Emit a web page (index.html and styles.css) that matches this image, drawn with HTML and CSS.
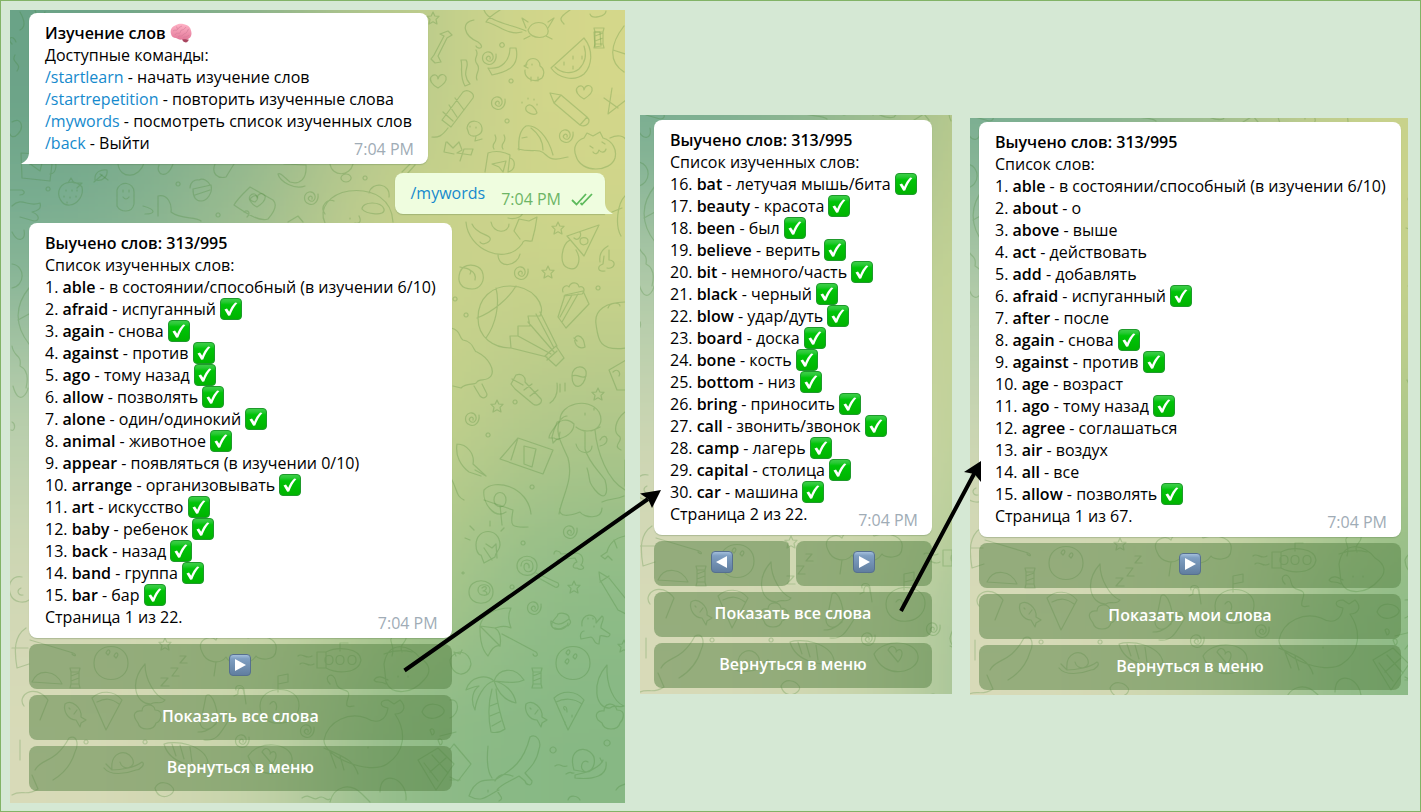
FILE: index.html
```html
<!DOCTYPE html>
<html lang="ru">
<head>
<meta charset="utf-8">
<meta name="viewport" content="width=device-width, initial-scale=1">
<title>Изучение слов</title>
<link rel="stylesheet" href="styles.css">
</head>
<body>
<svg class="defs" width="0" height="0" aria-hidden="true">
  <defs>
    <linearGradient id="green" x1="0" y1="0" x2="0" y2="1"><stop offset="0" stop-color="#3fd04a"/><stop offset=".16" stop-color="#28c934"/><stop offset=".3" stop-color="#00c408"/><stop offset="1" stop-color="#00b300"/></linearGradient>
    <linearGradient id="blue" x1="0" y1="0" x2="0" y2="1"><stop offset="0" stop-color="#a9c3df"/><stop offset=".2" stop-color="#7f9fc2"/><stop offset="1" stop-color="#607d9e"/></linearGradient>
    <linearGradient id="pink" x1="0" y1="0" x2="0" y2="1"><stop offset="0" stop-color="#ffb3c6"/><stop offset="1" stop-color="#e3799a"/></linearGradient>
    <symbol id="check" viewBox="0 0 22 22"><rect x=".5" y=".5" width="21" height="21" rx="3.5" fill="url(#green)" stroke="#1f9a2c"/><path d="M4.500 11.400 7 10.600 9.200 13.800C10.800 9.800 12.600 7.200 15.200 4.600L17.400 5C14.200 8.600 12 12.600 10.200 17.600L8.200 17.800z" fill="#fff"/></symbol>
    <symbol id="next" viewBox="0 0 22 22"><rect x=".5" y=".5" width="21" height="21" rx="3.5" fill="url(#blue)" stroke="#56708f"/><path d="M6 5 17 11 6 17z" fill="#fff"/></symbol>
    <symbol id="prev" viewBox="0 0 22 22"><rect x=".5" y=".5" width="21" height="21" rx="3.5" fill="url(#blue)" stroke="#56708f"/><path d="M16 5 5 11 16 17z" fill="#fff"/></symbol>
    <symbol id="brain" viewBox="0 0 22 22"><path d="M12 16c0 3 2 5 5 4.300l2-2.500z" fill="#a8455f"/><path d="M1 12C-.5 7 3 4 6 3c3-2 7-1.500 9-.5 3 .5 5.500 3 6 6 1 3 .5 6-1.500 7.500-2 2-5 1-7 1.500-3 .5-5-.5-6.500-1.500C3.500 16 1.500 14.500 1 12z" fill="url(#pink)"/><path d="M3 9c2-2 4 .5 5-2s3-2 4-3M5 13c1-3 4-1 5-2s0-3 2-3 3-2 4-3M8 15c1-2 4 0 5-2s3-1 4-3 0-3 2-2M13 16c1-2 4 0 6-3M6 5c1 0 2 1 1 2" fill="none" stroke="#d67f9b" stroke-width=".7"/></symbol>

    <filter id="soft" filterUnits="userSpaceOnUse" x="-300" y="-300" width="1250" height="1450"><feGaussianBlur stdDeviation="62"/></filter>
    <clipPath id="area"><rect x="10" y="10" width="615" height="793"/></clipPath>
    <path id="star" d="M0-6 1.800-2 6-1.700 3 1.400 4 6 0 3.800-4 6-3 1.400-6-1.700-1.800-2z"/>
    <path id="spiral" d="M7-4C8 3 3 8-2 6-8 4-8-4-2-6 4-7 6 0 2 3-1 4-4 1-2-1 0-3 2-1 1 1"/>
    <path id="heart" d="M0 7C-6 4-9-1-7-4-4-8 0-6 0-2 1-7 6-8 8-4 9 0 5 4 0 7z"/>
    <path id="candy" d="M-4-6H4V6H-4zM-4-2 4-5M-4 3 4 0M-4-6-5-10H5L4-6M-4 6-5 10H5L4 6"/>
    <path id="fish" d="M-11-8C-4-13 6-4 5 5L10 8 5 11 4 15 0 8C-8 8-13-1-11-8zM-7-4l1 1M-2 2l3-4"/>
    <path id="leaf" d="M-6 4C-7-4 0-7 6-6 7 0 2 6-6 4zM-7 6 1-1"/>
    <g id="wallpaper" clip-path="url(#area)">
      <g filter="url(#soft)">
        <path fill="#6aa387" d="M-200-200H164V169H-200z"/><path fill="#86b08b" d="M164-200H317V169H164z"/><path fill="#b7ca8c" d="M317-200H471V169H317z"/><path fill="#d4d78a" d="M471-200H900V169H471z"/>
        <path fill="#7eb093" d="M-200 169H164V328H-200z"/><path fill="#9dbe91" d="M164 169H317V328H164z"/><path fill="#c9d28c" d="M317 169H471V328H317z"/><path fill="#ccd48a" d="M471 169H900V328H471z"/>
        <path fill="#b5cdab" d="M-200 328H164V486H-200z"/><path fill="#bdd0a0" d="M164 328H317V486H164z"/><path fill="#c9d48c" d="M317 328H471V486H317z"/><path fill="#b2c88a" d="M471 328H900V486H471z"/>
        <path fill="#cfd7b4" d="M-200 486H164V645H-200z"/><path fill="#d2daae" d="M164 486H317V645H164z"/><path fill="#b2cb8d" d="M317 486H471V645H317z"/><path fill="#8fbc87" d="M471 486H900V645H471z"/>
        <path fill="#d8dab8" d="M-200 645H164V1000H-200z"/><path fill="#c9d5ac" d="M164 645H317V1000H164z"/><path fill="#8fbb88" d="M317 645H471V1000H317z"/><path fill="#87b884" d="M471 645H900V1000H471z"/>
      </g>
      <g class="doodles">
        <!-- top strip and left column -->
        <path d="M20 12q8 14 0 18M35 10l4 12 6-10M15 55c-5 8 8 8 2 16M16 42c-3-8-10-4-4 2M12 122c10-6 12 6 6 12s-8 0-8 0M21 153 53 155 50 181 22 178zM52 160c6 0 5 14-2 14M28 162l15-3-3 12-7-5z"/>
        <path d="M60 188C56 196 62 206 70 205 78 204 84 195 82 187 76 180 64 181 60 188zM68 183l3-5 3 5 8 0-5 5M66 190v1M72 190v1M77 190v1M64 196v1M70 197v1M76 196v1M67 202v1"/>
        <path d="M117 190C120 180 134 182 134 192V204C132 214 120 212 117 206zM123 190v2M129 190v2M123 197q3 4 6 0M193 189l18-4c2 8-4 16-10 16s-8-6-8-12zM190 188c0-6 5-9 9-8 4-3 10 2 11 5M195 195l15-5"/>
        <path d="M250 187 273 200C277 204 276 210 268 219 260 222 247 214 234 205 238 198 245 192 250 187zM252 197c5-4 8 1 3 5-5-1-6-3-3-5zM244 212c4-3 7 1 3 5"/>
        <path d="M325 223C318 208 330 194 349 191 374 188 392 200 393 222M325 214c-6-8 3-16 9-13M369 193c3-12 22-10 20 4M362 209c0-8 20-8 22 0s-18 5-22 0zM350 218v1M359 216c3 6 0 8-4 7"/>
        <path d="M118 164c2 16 22 14 26-1M159 165c-4 9 8 16 14-1M215 164c-4 10 3 15 11 13l8-13M284 164l22 1c1 14-6 20-16 17-6-5-10-10-12-8 2 8 17 16 27 12M330 164c2 13 20 13 23 0M402 172l8-8M407 174l8-9M100 174l8 6"/>
        <path d="M10 190h12c4 2 2 5-2 5M12 206c10-10 16 2 28-3 2 6-3 8-8 9 8 3 8 9 2 9l-14-4M143 206c14 4 12 8 2 8M158 216V196c10-2 14 8 13 16 10 8 24 4 30 9M288 222l10-6 5 6"/>
        <path d="M12 232c6 12 14 8 12-2M12 264c14 2 13 22 0 24M29 288C15 305 14 325 29 344M18 320l11-6M12 346c2 12 10 8 8 20 8 4 8 14 6 22M13 386c6 22 15 6 15 2M12 422c4 2 3 10-1 8M22 577c-8-2-15 5-12 16s15 10 19 7M21 588c-5 2-3 8 2 7M26 628c-12 8-12 22-9 40l12-4M12 648h16"/>
        <!-- upper right -->
        <path d="M440 34l8-3 4 4-5 3-9 18 3 6-6 1-4-4 3-4 10-19zM474 20c-14 2-10 16 4 22 8 6 0 8-2 4M484 10c4 12 26 14 42 21M500 10c-8 5-12 8-14 12 12 2 22 14 36 10M528 30c4-10 18-10 20 0s-18 10-20 0zM526 28l-4-10 6 4M548 28l6-10-6 4M530 36l-6 3M546 36l6 3M564 24c-4-4-6-6 6-14M590 14c2 6 16 2 16-3M594 32l6 0 1 14-6 1z"/>
        <path d="M551 68 584 38C594 50 592 66 584 74 574 82 558 78 551 68zM555 67c6 6 16 8 24 2 6-6 8-14 5-23M564 62v3M573 56v3M582 56v3M573 66v3"/>
        <path d="M526 66c0-10 14-10 14 0 4 2 5 8 2 12-8 6-18 0-17-8M527 64l-3 2 4 2M532 64v1M531 81v-4M538 81v-4M516 48c4 18-8 24-24 27l-4-7c14 2 22-8 22-20zM466 60c5 6-6 12 4 24l-5 2c-6-10-2-20-4-26zM476 50c4 6-4 8 1 14s-3 10 0 16"/>
        <path d="M442 120 463 92C468 88 475 94 473 98L451 127zM443 112l10 9M449 105l8 12M455 98l9 12M448 128c-6 8-10 10-16 9M467 128c2-10 14-8 15 0s-10 10-13 6zM476 136l-1 5 7-2M470 126v1M476 127v1"/>
        <path d="M550 93 561 95 587 117 580 125 554 103zM554 103l7-8M580 125c6 3 12-3 7-8M526 107c4-6 10 2 11 6-2 3-13 0-11-6zM522 102v1M528 98v1M534 99v1M537 104v1M519 150C518 138 520 130 526 126 536 124 548 136 553 155M518 149c16 4 20-2 28 6s18 2 22 2M531 128c8 6 12 14 12 22M522 138l5-1"/>
        <path d="M485 172 488 153C496 150 505 152 510 155L508 172M510 158c6 2 6 12-2 14M492 164l14-3-3 11-4-5zM494 149c-4-6 5-6 1-14M503 149c-4-6 5-6 1-14M447 142l6 6 6-6 3 8-5 3 14 2 2-6-9 0-4 12M446 142l-2 10 10 2"/>
        <path d="M576 156c-4-10 2-16 8-18l3-5 6 3 7-4 3 6c10 3 14 12 12 20-4 14-34 16-39-2zM590 146l3 2M602 142l3 2M593 152c2 3 5 2 6-2 2 3 6 3 7-1M610 138c8-4 14-2 16 2M624 26c-14 18-16 36 0 46M613 50l12 4M612 88l-4 26 18-14M604 98l14 10M625 196c-8 8-10 30-4 40M612 212l10-4"/>
        <!-- centre right -->
        <path d="M466 222c2 28 40 44 56 22 2-6 6-2 10-3l3-12 2-12-8 4-10-2-5 12 6 8M472 224c4 10 16 10 18 14s-8 8-10 4M491 222c2 12 18 12 18 2M498 254c0 16 20 12 22 0M508 218c8 2 16-2 14-6M567 236 599 225 584 256zM574 238c4 4 8-2 6-6M580 241c0 6 8 4 8 0s-8-5-8 0zM570 240c-8 4-12 24-2 28s14-8 8-18M600 262c-1-6 1-12 8-16M604 256l-1 8c-6 2-6 8 2 7M609 250v10c8 0 6 10-2 8"/>
        <path d="M460 272c4-10 18-8 22-1 4 10-2 18-10 18-12 0-15-8-12-17zM470 274c4-6-8-6-10-7M470 270c4 2 6 6 5 10"/>
        <path d="M478 318C478 298 492 286 510 286 534 286 546 306 540 316M478 318c0 20 16 30 33 30M511 348l-1-12 8 0 0-10 12 0-2-10 12 0M477 318c16-6 32-20 39-32M486 338c10-14 14-34 10-50M540 312 557 346M511 348l36 9M518 336l33 18M528 322l26 30M536 314l18 34M545 356l11-10 8 12-8 8zM547 360l10-9M558 317l7-22 18-4 6 13-23 24zM562 322l16-28M560 317l12-22M563 292c-2-5 4-8 6-5 2-6 9-5 10 0 6-2 6 5 3 7l-18 2"/>
        <path d="M626 302c-20 0-32 8-30 22s2 28 30 24M608 308c2-6 12-6 12-2M575 342c-2-8 8-10 10 5-4 2-9 0-10-5zM574 338l3 3M572 376c0-12 16-12 14-1-2 14-14 16-14 1zM572 376c6-3 10 4 14 0M626 360l-17 10 8 20 8 0M613 372c4-4 8 0 6 4"/>
        <path d="M451 328c10 2 8 10 12 12 12 2 10 12 14 12 12 6 18 18 14 24s-12 2-14 6-10 0-16 6l-8-2M474 386l6 10c4 4 9 0 6-4l-4-8M511 384l5-9c6-2 10 2 9 7l16 17c2 4-4 8-8 5l-18-15zM512 379l11 6M524 390l8-6M530 396l8-6M550 403c6-4 8-12 7-20M560 384v8M565 383v8"/>
        <path d="M560 420c0-16 28-24 39-8 4 8 2 16-8 19M567 416c-6 0-6 6-10 6-1 6-8 10-8 16l5 0c8 4 4 0 6-6M560 420c-6 12 2 24 8 38 6 22-6 38-9 56M585 432v17c4 14 14 22 20 31 4 14 0 22-10 10-8-10-4-10-8-22M595 430c2 22 12 50 30 60M576 444c2 10 16 12 16 2M600 440c6-10 12 4 0 6M576 427q10 8 24 0M585 413v2M594 408v2M560 508c-2 10 10 8 20 4 4 6 22 8 22-4M602 502c8-4 14-2 22-6"/>
        <path d="M457 444c10 0 18 10 16 20l13 12M457 444c-2 12 4 22 12 28l12 4M475 470l11 6M500 459 518 438 553 450 543 474zM518 438l-7 22M524 446l12 3-4 18-8-3zM484 490c10-12 44-4 47 24M484 490c-2 12 10 30 22 22M494 500c0-10 12-10 12 0s-12 8-12 0zM452 480c6 12 4 16 12 20M554 430c4-12 14-12 20-6 0 8-8 14-17 15l-4 4-1-6zM625 412c-10 8-12 20-6 24s-8 10 2 14M625 460v26"/>
        <path d="M484 500 513 510C511 524 508 528 528 527M500 505l2 20M476 545c0-18 24-18 24 0 0 6-5 7-5 12l-11 6-3-8c-3 0-5-5-5-10zM484 548l8 12M486 544l6 4 4-4 1 14M470 540l-5-2M474 530l-4-4M490 526v-5M501 531l3-3"/>
        <path d="M469 592c0-15 24-15 24 0s-24 15-24 0zM478 590c0-7 12-7 12 0s-12 7-12 0zM482 588c5-4 6 2 1 3 6 0 4 6 0 4M517 566c0-13 20-13 20 0s-20 12-20 0zM521 566c0-8 12-8 12 0s-9 7-9 1 6-4 5 1M536 573l22 10c2 3-1 5-3 4l-20-11M554 554c0-5 6-3 7 0l16-1c8 2 6 10 4 12 6 3 0 6-4 3-6 1-4-5 0-6l-2-4-18 2M599 572l1 8 18 30 8 4M599 572l10 6 16 20M600 582l9-6M625 536c-10 2-16 8-18 16l-6 4 4 3 3-3 4 4M614 540l3 8"/>
        <path d="M480 626c2-12 16-18 31-18-4 8-2 14 0 20-8-4-14 0-16 0 6 4 6 12 5 18-5-2-10 6-12 10-8-8-8-22-8-30zM480 626l20 20M495 628l-15-2M502 634l34 18c4 4-2 6-3 2M552 626c-2-6 6-8 6-12 4-2 12 0 11 5 4 4-1 6-1 7M551 621c8 6 12 2 18-2M551 621c-2 12 16 10 17 2M555 628c4 2 8 0 11-2M582 626c-2-14 16-14 14-3l6-7c4 2-2 8-1 12l9 6c0 6-8 0-10 2l-1 8c-6 0-4-6-8-7l-10 2c-2-6 2-8 3-8M588 618v1M593 618v1M594 626v1"/>
        <path d="M556 663c0-22 34-22 34 0s-34 22-34 0zM566 653c2-6 6-2 2 2zM573 657c2-6 6-2 2 2zM565 662c2-6 6-2 2 2zM607 665c-16 18-12 44 3 43 4-4 10 0 14-2-10-4-18-20-17-41zM598 720c-4-6 0-10 6-9 0-8 10-10 13-1 10 0 6 10 3 13-2 8-16 8-18 0zM554 698c8-8 22-8 30 2l-16 30zM556 702c8-4 18-4 26 2M565 710c-4-4 2-6 2 2M572 717v-2M565 724v-2"/>
        <path d="M466 690c4-14 20-16 28-9 4-12 20-16 30-1-8 4-18 2-30 1 10 2 20 10 22 22-10-2-18-10-22-22-10 2-18 18-19 29-5-10-2-20 4-24-4 0-8 2-13 4zM492 689c-4 14-4 28-1 43 4 1 10 0 14-3-4-12-8-26-9-40M490 706l8-3M490 716l10-4M492 726l9-5M450 660c4-12 20-10 21 4-2 14-20 14-21-4zM456 656l-2-4 6 2 2-4M450 700c10-2 10 14 0 18"/>
        <path d="M469 796c6-18 18-16 26-16 16-10 28-16 35-43 6-4 12 4 9 12-2 12-8 18-14 24l7 8c0 6-6 4-7 0l-6-5c-10 6-18 8-22 14 2 6 8 8 2 11M469 796c14 8 20-2 30-6M495 781c6-12 18-4 18-5M450 749l4-5 17 20-13 17-8-4M450 780h10M488 790v2M492 778c-6-8-5-22-4-32"/>
        <path d="M574 770c-6-20 8-24 16-18 8 6 4 20-4 20-8-2-4-14 2-10M574 770l12 2c8-2 16-8 17-12M606 762c2 14-12 18-31 16v-3l12-3M600 758l2 4M555 766c6-4 6 2 12 0M566 774c6-4 4 0 8-1M616 790c4-6 6-4 9-6M568 800c2-6 10-4 12 0"/>
        <!-- lower left and centre -->
        <path d="M30 640l40 12c8 2 6 6 2 2M94 663c0-22 34-22 34 0s-34 22-34 0zM106 653c2-6 6-2 2 2zM114 656c2-6 6-2 2 2zM32 682c6-14 24-12 30 2zM145 664c-16 18-10 40 6 40 4-4 10 2 14-4-10-4-20-20-20-36M136 720c-4-6 0-10 6-9 0-8 12-8 13-1 10 0 6 12 1 13-2 8-16 8-18 0zM161 678h7l-7 8h8M171 668h7l-6 8h7M180 656h6l-6 7h7M92 698c8-8 22-8 30 2l-16 30zM97 702c8-4 14-4 22 2M202 652c-6-12 8-18 14-12 4-12 28-12 32-2 16-6 30 2 28 12 0 12-18 10-20 6-6 10-26 10-30 1-6 8-20 6-24-5zM216 662l-2 14M240 660l3 15"/>
        <path d="M326 652c12-6 34-4 35 8-2 14-24 14-35 8zM317 652h9v16h-9zM325 660c0-6 8-6 8 0s-8 6-8 0zM336 660c0-6 8-6 8 0s-8 6-8 0zM348 660c0-6 8-6 8 0s-8 6-8 0zM340 651v-8h8M298 656c4-4 8 4 14 0M300 664c4-4 8 4 14 0M384 664c4-24 26-20 36-6 10 6 12 14 4 22-12 14-32 16-38 2zM386 684c-6-4-10 0-12-4 4-6 10-2 14 0M384 654c10-4 20-4 28-2M392 656c4-12-6-16 2-20M402 652c-4-8 6-10 4-16M398 676v1M408 676v1"/>
        <path d="M260 706c0-22 40-22 39 0s-39 24-39 0zM270 704c4-6 8 0 6 6M278 692v-16l10-2v8l-10 2M244 694c0-8-7-8-6 0l-4 2M236 690c-2-6 8-6 8 0l2 14M206 696c6-6 14 16 10 28-12 12-20 0-14-8zM198 732c16 0 20-14 28-20l4 6c-8 12-12 24-26 22M330 684c-8-8 4-14 6-2s16 4 12 16 2 8 6 8"/>
        <path d="M324 740c4-20 26-28 42-22 10 6 20 4 22-10-10-2-8-8 0-8l6 4 6-4c8 8 2 14-5 14 12 18 10 38-8 50-18 12-64-8-63-24zM324 748c18 8 30 12 34 26M330 752l6 16M340 756l4 14M368 747v1M422 712c4-12 20-8 22-2s-16 14-22 2zM430 730c4-4 6 4 2 5zM438 740c4-4 6 4 2 5zM418 760l20-12 16 16-18 26zM424 763l14 18M432 755l16 18M430 772l16-14"/>
        <path d="M35 770c6-12 20-6 34-32 8-4 10 6 6 14-4 14-12 22-22 28M112 770c-2-18 14-22 20-12s-10 14-12 4M106 764l6 6c8 0 22-2 30-8 4 2-2 8-6 8-10 4-26 6-32-2M164 744c10-4 40 0 44 18-4 8-38 4-44-18zM172 744l4 12M180 745l4 14M190 747l2 15M248 756c10-16 42-14 44 2s-34 26-44-2zM262 752c4-8 10 0 8 2 4-6 10 0 2 10zM155 788c4-8 14-6 18 0s-14 16-18 0zM330 802c4-16 20-20 32-8l8 8M380 792c0-24 28-14 26 8M302 798c8-6 10 4 16 0s8 4 12 1M12 795c10-6 14 2 26-6l-6-14"/>
        <path d="M440 736l16-4M20 740v20M24 706c-8-10 10-24 24-6l-8 20"/>
        <use href="#star" x="433" y="18"/><use href="#star" x="558" y="228"/><use href="#star" x="548" y="272"/><use href="#star" x="497" y="406"/><use href="#star" x="598" y="394"/><use href="#star" x="574" y="587"/><use href="#star" x="165" y="644"/><use href="#star" x="624" y="646"/>
        <use href="#spiral" x="311" y="198"/><use href="#spiral" x="498" y="103"/><use href="#spiral" x="489" y="58"/><use href="#spiral" x="566" y="136"/><use href="#spiral" x="521" y="273"/><use href="#spiral" x="472" y="419"/><use href="#spiral" x="570" y="532"/><use href="#spiral" x="534" y="608"/><use href="#spiral" x="307" y="731"/><use href="#spiral" x="242" y="741"/>
        <use href="#heart" x="438" y="81"/><use href="#heart" x="584" y="92"/><use href="#heart" x="257" y="200"/>
        <use href="#candy" x="599" y="38"/><use href="#candy" x="537" y="678"/><use href="#candy" x="75" y="678"/>
        <use href="#fish" x="537" y="712"/><use href="#fish" x="76" y="712"/><use href="#leaf" x="101" y="176"/>
        <path d="M501 43a1 1 0 1 0 2 4 2 2 0 0 0-2-4M455 297a2 2 0 1 0 .1 0M466 313a2 2 0 1 0 .1 0M598 286a2 2 0 1 0 .1 0M515 400a2 2 0 1 0 .1 0M488 433a2 2 0 1 0 .1 0M532 485a2 2 0 1 0 .1 0M523 541a2 2 0 1 0 .1 0M512 585a2 2 0 1 0 .1 0M463 572a1 1 0 1 0 .1 0M553 747a3 3 0 1 0 .1 0M607 740a3 3 0 1 0 .1 0M48 187a2 2 0 1 0 .1 0M178 182a2 2 0 1 0 .1 0M218 213a2 2 0 1 0 .1 0M346 174a5 4 0 1 0 .1 0M365 176a2 2 0 1 0 .1 0M145 740a2 2 0 1 0 .1 0M86 740a2 2 0 1 0 .1 0M507 119a2 2 0 1 0 .1 0M511 79a2 2 0 1 0 .1 0"/>
      </g>
    </g>
  </defs>
</svg>

<main class="board">
  <section class="chat chat-main" aria-label="Изученные слова, страница 1">
    <svg class="backdrop" viewBox="10 10 615 793" preserveAspectRatio="xMinYMin slice" aria-hidden="true"><use href="#wallpaper"/></svg>
    <article class="bubble bubble-in">
      <p class="title">Изучение слов <svg class="emoji" role="img" aria-label="Мозг"><use href="#brain"/></svg></p>
      <p>Доступные команды:</p>
      <p><a href="#startlearn">/startlearn</a> - начать изучение слов</p>
      <p><a href="#startrepetition">/startrepetition</a> - повторить изученные слова</p>
      <p><a href="#mywords">/mywords</a> - посмотреть список изученных слов</p>
      <p><a href="#back">/back</a> - Выйти</p>
      <time class="stamp">7:04 PM</time>
      <svg class="tail tail-in" viewBox="0 0 8 12" aria-hidden="true"><path d="M8 0C8 6 5 9 0 12H8z" fill="#fff"/></svg>
    </article>
    <article class="bubble bubble-out">
      <a href="#mywords">/mywords</a>
      <time class="sent">7:04 PM</time>
      <svg class="ticks" viewBox="0 0 22 14" role="img" aria-label="Прочитано"><path d="M1 8 5.500 12.500 15 2M9.500 11 11 12.500 21 2" fill="none" stroke="#5dba5c" stroke-width="1.800"/></svg>
      <svg class="tail tail-out" viewBox="0 0 8 12" aria-hidden="true"><path d="M0 0C0 6 3 9 8 12H0z" fill="#effddf"/></svg>
    </article>
    <div class="reply">
      <article class="bubble">
        <p class="title">Выучено слов: 313/995</p>
        <p>Список изученных слов:</p>
        <ul class="words">
          <li>1. <b>able</b> - в состоянии/способный (в изучении 6/10)</li>
          <li>2. <b>afraid</b> - испуганный <svg class="emoji" role="img" aria-label="Изучено"><use href="#check"/></svg></li>
          <li>3. <b>again</b> - снова <svg class="emoji" role="img" aria-label="Изучено"><use href="#check"/></svg></li>
          <li>4. <b>against</b> - против <svg class="emoji" role="img" aria-label="Изучено"><use href="#check"/></svg></li>
          <li>5. <b>ago</b> - тому назад <svg class="emoji" role="img" aria-label="Изучено"><use href="#check"/></svg></li>
          <li>6. <b>allow</b> - позволять <svg class="emoji" role="img" aria-label="Изучено"><use href="#check"/></svg></li>
          <li>7. <b>alone</b> - один/одинокий <svg class="emoji" role="img" aria-label="Изучено"><use href="#check"/></svg></li>
          <li>8. <b>animal</b> - животное <svg class="emoji" role="img" aria-label="Изучено"><use href="#check"/></svg></li>
          <li>9. <b>appear</b> - появляться (в изучении 0/10)</li>
          <li>10. <b>arrange</b> - организовывать <svg class="emoji" role="img" aria-label="Изучено"><use href="#check"/></svg></li>
          <li>11. <b>art</b> - искусство <svg class="emoji" role="img" aria-label="Изучено"><use href="#check"/></svg></li>
          <li>12. <b>baby</b> - ребенок <svg class="emoji" role="img" aria-label="Изучено"><use href="#check"/></svg></li>
          <li>13. <b>back</b> - назад <svg class="emoji" role="img" aria-label="Изучено"><use href="#check"/></svg></li>
          <li>14. <b>band</b> - группа <svg class="emoji" role="img" aria-label="Изучено"><use href="#check"/></svg></li>
          <li>15. <b>bar</b> - бар <svg class="emoji" role="img" aria-label="Изучено"><use href="#check"/></svg></li>
        </ul>
        <p>Страница 1 из 22.</p>
        <time class="stamp">7:04 PM</time>
      </article>
      <div class="keys"><button class="key" type="button" aria-label="Следующая страница"><svg class="emoji"><use href="#next"/></svg></button></div>
      <div class="keys"><button class="key" type="button">Показать все слова</button></div>
      <div class="keys"><button class="key" type="button">Вернуться в меню</button></div>
    </div>
  </section>

  <section class="chat chat-second" aria-label="Изученные слова, страница 2">
    <svg class="backdrop" viewBox="14 217 312 579" preserveAspectRatio="xMinYMin slice" aria-hidden="true"><use href="#wallpaper"/></svg>
    <div class="reply">
      <article class="bubble">
        <p class="title">Выучено слов: 313/995</p>
        <p>Список изученных слов:</p>
        <ul class="words">
          <li>16. <b>bat</b> - летучая мышь/бита <svg class="emoji" role="img" aria-label="Изучено"><use href="#check"/></svg></li>
          <li>17. <b>beauty</b> - красота <svg class="emoji" role="img" aria-label="Изучено"><use href="#check"/></svg></li>
          <li>18. <b>been</b> - был <svg class="emoji" role="img" aria-label="Изучено"><use href="#check"/></svg></li>
          <li>19. <b>believe</b> - верить <svg class="emoji" role="img" aria-label="Изучено"><use href="#check"/></svg></li>
          <li>20. <b>bit</b> - немного/часть <svg class="emoji" role="img" aria-label="Изучено"><use href="#check"/></svg></li>
          <li>21. <b>black</b> - черный <svg class="emoji" role="img" aria-label="Изучено"><use href="#check"/></svg></li>
          <li>22. <b>blow</b> - удар/дуть <svg class="emoji" role="img" aria-label="Изучено"><use href="#check"/></svg></li>
          <li>23. <b>board</b> - доска <svg class="emoji" role="img" aria-label="Изучено"><use href="#check"/></svg></li>
          <li>24. <b>bone</b> - кость <svg class="emoji" role="img" aria-label="Изучено"><use href="#check"/></svg></li>
          <li>25. <b>bottom</b> - низ <svg class="emoji" role="img" aria-label="Изучено"><use href="#check"/></svg></li>
          <li>26. <b>bring</b> - приносить <svg class="emoji" role="img" aria-label="Изучено"><use href="#check"/></svg></li>
          <li>27. <b>call</b> - звонить/звонок <svg class="emoji" role="img" aria-label="Изучено"><use href="#check"/></svg></li>
          <li>28. <b>camp</b> - лагерь <svg class="emoji" role="img" aria-label="Изучено"><use href="#check"/></svg></li>
          <li>29. <b>capital</b> - столица <svg class="emoji" role="img" aria-label="Изучено"><use href="#check"/></svg></li>
          <li>30. <b>car</b> - машина <svg class="emoji" role="img" aria-label="Изучено"><use href="#check"/></svg></li>
        </ul>
        <p>Страница 2 из 22.</p>
        <time class="stamp">7:04 PM</time>
      </article>
      <div class="keys">
        <button class="key" type="button" aria-label="Предыдущая страница"><svg class="emoji"><use href="#prev"/></svg></button>
        <button class="key" type="button" aria-label="Следующая страница"><svg class="emoji"><use href="#next"/></svg></button>
      </div>
      <div class="keys"><button class="key" type="button">Показать все слова</button></div>
      <div class="keys"><button class="key" type="button">Вернуться в меню</button></div>
    </div>
  </section>

  <section class="chat chat-third" aria-label="Все слова, страница 1">
    <svg class="backdrop" viewBox="15 218 438 577" preserveAspectRatio="xMinYMin slice" aria-hidden="true"><use href="#wallpaper"/></svg>
    <div class="reply">
      <article class="bubble">
        <p class="title">Выучено слов: 313/995</p>
        <p>Список слов:</p>
        <ul class="words">
          <li>1. <b>able</b> - в состоянии/способный (в изучении 6/10)</li>
          <li>2. <b>about</b> - о</li>
          <li>3. <b>above</b> - выше</li>
          <li>4. <b>act</b> - действовать</li>
          <li>5. <b>add</b> - добавлять</li>
          <li>6. <b>afraid</b> - испуганный <svg class="emoji" role="img" aria-label="Изучено"><use href="#check"/></svg></li>
          <li>7. <b>after</b> - после</li>
          <li>8. <b>again</b> - снова <svg class="emoji" role="img" aria-label="Изучено"><use href="#check"/></svg></li>
          <li>9. <b>against</b> - против <svg class="emoji" role="img" aria-label="Изучено"><use href="#check"/></svg></li>
          <li>10. <b>age</b> - возраст</li>
          <li>11. <b>ago</b> - тому назад <svg class="emoji" role="img" aria-label="Изучено"><use href="#check"/></svg></li>
          <li>12. <b>agree</b> - соглашаться</li>
          <li>13. <b>air</b> - воздух</li>
          <li>14. <b>all</b> - все</li>
          <li>15. <b>allow</b> - позволять <svg class="emoji" role="img" aria-label="Изучено"><use href="#check"/></svg></li>
        </ul>
        <p>Страница 1 из 67.</p>
        <time class="stamp">7:04 PM</time>
      </article>
      <div class="keys"><button class="key" type="button" aria-label="Следующая страница"><svg class="emoji"><use href="#next"/></svg></button></div>
      <div class="keys"><button class="key" type="button">Показать мои слова</button></div>
      <div class="keys"><button class="key" type="button">Вернуться в меню</button></div>
    </div>
  </section>

  <svg class="arrows" viewBox="0 0 1421 812" aria-hidden="true">
    <path d="M404.500 670.500 648 499M901 611 974.500 473" fill="none" stroke="#000" stroke-width="4"/>
    <path d="M661 490 652 508 648 499 640 493.500zM981 461 981 482 974.500 474 964 472z"/>
  </svg>
</main>
</body>
</html>
```
FILE: styles.css
```css
* { box-sizing: border-box; }

body {
  margin: 0;
  font-family: "Open Sans", "Noto Sans", sans-serif;
  font-size: 16px;
  line-height: 22px;
  color: #000;
  background: #d5e8d4;
}

p, ul { margin: 0; padding: 0; }
li { list-style: none; }
b, .title { font-weight: 600; }
a { color: #168acd; text-decoration: none; }

.defs { position: absolute; }

.doodles {
  fill: none;
  stroke: #3c7d28;
  stroke-opacity: .24;
  stroke-width: 1.2;
  stroke-linecap: round;
  stroke-linejoin: round;
}

.board {
  position: relative;
  display: grid;
  grid-template-columns: 615fr 327fr 456fr;
  align-items: center;
  min-height: 100vh;
  padding: 9px 12px 8px 9px;
  border: 1px solid #82b366;
}

.chat {
  position: relative;
  display: flex;
  flex-direction: column;
  align-items: flex-start;
  gap: 9px;
  overflow: hidden;
}

.chat-main { padding: 3px 20px 12px 19px; }
.chat-second { margin: 0 0 4px 15px; padding: 5px 20px 6px 14px; }
.chat-third { margin-left: 18px; padding: 4px 7px 5px 9px; }

.backdrop {
  position: absolute;
  inset: 0;
  width: 100%;
  height: 100%;
}

.bubble {
  position: relative;
  padding: 9px 16px 10px;
  border-radius: 8px;
  background: #fff;
  box-shadow: 0 1px 1px rgba(60, 100, 50, .25);
  white-space: nowrap;
}

.bubble-in { border-bottom-left-radius: 0; }

.bubble-out {
  display: flex;
  align-self: flex-end;
  gap: 10px;
  padding-right: 12px;
  border-bottom-right-radius: 0;
  background: #effddf;
}

.stamp {
  position: absolute;
  right: 14px;
  bottom: 4px;
  color: #a0acb6;
}

.sent {
  padding-left: 6px;
  margin: 6px 0 -6px;
  color: #6db566;
}

.ticks {
  align-self: flex-end;
  width: 22px;
  height: 14px;
  margin-bottom: -2px;
}

.tail {
  position: absolute;
  bottom: 0;
  width: 8px;
  height: 12px;
}

.tail-in { right: 100%; }
.tail-out { left: 100%; }

.emoji {
  display: inline-block;
  width: 22px;
  height: 22px;
  vertical-align: top;
}

.reply {
  position: relative;
  display: flex;
  flex-direction: column;
  gap: 6px;
}

.chat-second .reply,
.chat-third .reply { align-self: stretch; }

.keys { display: flex; gap: 6px; }

.key {
  display: flex;
  flex: 1;
  align-items: center;
  justify-content: center;
  height: 45px;
  padding: 0 8px 4px;
  border: 0;
  border-radius: 8px;
  background: rgba(84, 128, 66, .5);
  color: #fff;
  font: inherit;
  font-weight: 600;
  cursor: pointer;
}

.arrows {
  position: absolute;
  inset: -1px;
  width: calc(100% + 2px);
  height: calc(100% + 2px);
  pointer-events: none;
}
```
